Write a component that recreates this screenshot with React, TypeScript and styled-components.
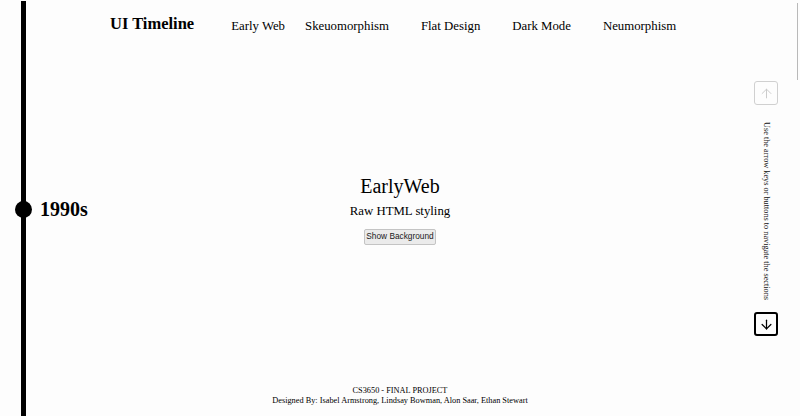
import React from "react";
import styled, { createGlobalStyle } from "styled-components";
import { ArrowUp, ArrowDown } from "lucide-react";

const Global = createGlobalStyle`
  html, body { margin: 0; padding: 0; background: #fdfdfd; }
  body { font-family: "Liberation Serif", "Times New Roman", serif; color: #000; }
`;

const Page = styled.div`
  display: grid;
  grid-template-columns: 100px 1fr 100px;
  width: 800px;
  height: 416px;
  overflow: hidden;
  background: #fdfdfd;
`;

const TimelineCol = styled.aside`
  position: relative;
  display: flex;
  align-items: center;
  padding-left: 15px;
  &::before {
    content: "";
    position: absolute;
    left: 21px;
    top: 1px;
    bottom: 0;
    width: 5px;
    background: #000;
  }
`;

const Marker = styled.div`
  position: relative;
  display: flex;
  align-items: center;
  gap: 8px;
  margin-top: 2px;
`;

const Dot = styled.span`
  width: 17px;
  height: 17px;
  border-radius: 50%;
  background: #000;
`;

const Year = styled.span`
  font-size: 20px;
  font-weight: bold;
`;

const Main = styled.main`
  display: flex;
  flex-direction: column;
`;

const Header = styled.header`
  display: flex;
  align-items: center;
  height: 52px;
  padding-left: 10px;
`;

const Title = styled.h1`
  margin: 0 37px 0 0;
  font-size: 16.5px;
  font-weight: bold;
  position: relative;
  top: -2px;
`;

const NavLink = styled.a<{ $gap: number }>`
  margin-left: ${(p) => p.$gap}px;
  font-size: 12.8px;
  color: #000;
  text-decoration: none;
`;

const Content = styled.section`
  flex: 1;
  display: flex;
  flex-direction: column;
  align-items: center;
  justify-content: center;
  padding-bottom: 20px;
`;

const Era = styled.h2`
  margin: 0 0 2px;
  font-size: 20px;
  font-weight: normal;
  line-height: 24px;
`;

const Tagline = styled.p`
  margin: 0;
  font-size: 12.8px;
  line-height: 22px;
`;

const BgButton = styled.button`
  margin-top: 7px;
  width: 72px;
  height: 16px;
  padding: 0;
  font-family: "Liberation Sans", Arial, sans-serif;
  font-size: 8.3px;
  color: #1a1a1a;
  background: #ebebeb;
  border: 1px solid #c4c4c4;
  border-radius: 2px;
  line-height: 1;
`;

const Footer = styled.footer`
  display: flex;
  flex-direction: column;
  align-items: center;
  padding-bottom: 10px;
  font-size: 8.3px;
  line-height: 10px;
`;

const SideCol = styled.aside`
  position: relative;
  display: flex;
  flex-direction: column;
  align-items: flex-end;
  padding: 81px 22px 0 0;
`;

const SideInner = styled.div`
  display: flex;
  flex-direction: column;
  align-items: center;
  width: 24px;
`;

const ScrollThumb = styled.div`
  position: absolute;
  right: 2px;
  top: 3px;
  width: 1.5px;
  height: 77px;
  background: #b9b9b9;
`;

const ArrowBtn = styled.button<{ $disabled?: boolean }>`
  width: 24px;
  height: 24px;
  padding: 0;
  display: flex;
  align-items: center;
  justify-content: center;
  background: transparent;
  border: ${(p) => (p.$disabled ? "1px solid #d0d0d0" : "2px solid #000")};
  border-radius: 3px;
  color: ${(p) => (p.$disabled ? "#c8c8c8" : "#000")};
`;

const Hint = styled.p`
  writing-mode: vertical-rl;
  margin: 17px 0 12px 0;
  font-size: 8.25px;
  line-height: 10px;
  color: #111;
  white-space: nowrap;
`;

const navItems: { label: string; gap: number }[] = [
  { label: "Early Web", gap: 0 },
  { label: "Skeuomorphism", gap: 20 },
  { label: "Flat Design", gap: 32 },
  { label: "Dark Mode", gap: 32 },
  { label: "Neumorphism", gap: 32 },
];

export default function App() {
  return (
    <>
      <Global />
      <Page>
        <TimelineCol>
          <Marker>
            <Dot />
            <Year>1990s</Year>
          </Marker>
        </TimelineCol>
        <Main>
          <Header>
            <Title>UI Timeline</Title>
            {navItems.map((n) => (
              <NavLink key={n.label} $gap={n.gap}>
                {n.label}
              </NavLink>
            ))}
          </Header>
          <Content>
            <Era>EarlyWeb</Era>
            <Tagline>Raw HTML styling</Tagline>
            <BgButton>Show Background</BgButton>
          </Content>
          <Footer>
            <span>CS3650 - FINAL PROJECT</span>
            <span>Designed By: Isabel Armstrong, Lindsay Bowman, Alon Saar, Ethan Stewart</span>
          </Footer>
        </Main>
        <SideCol>
          <ScrollThumb />
          <SideInner>
            <ArrowBtn $disabled aria-label="previous">
              <ArrowUp size={15} strokeWidth={1.5} />
            </ArrowBtn>
            <Hint>Use the arrow keys or buttons to navigate the sections</Hint>
            <ArrowBtn aria-label="next">
              <ArrowDown size={15} strokeWidth={2} />
            </ArrowBtn>
          </SideInner>
        </SideCol>
      </Page>
    </>
  );
}
